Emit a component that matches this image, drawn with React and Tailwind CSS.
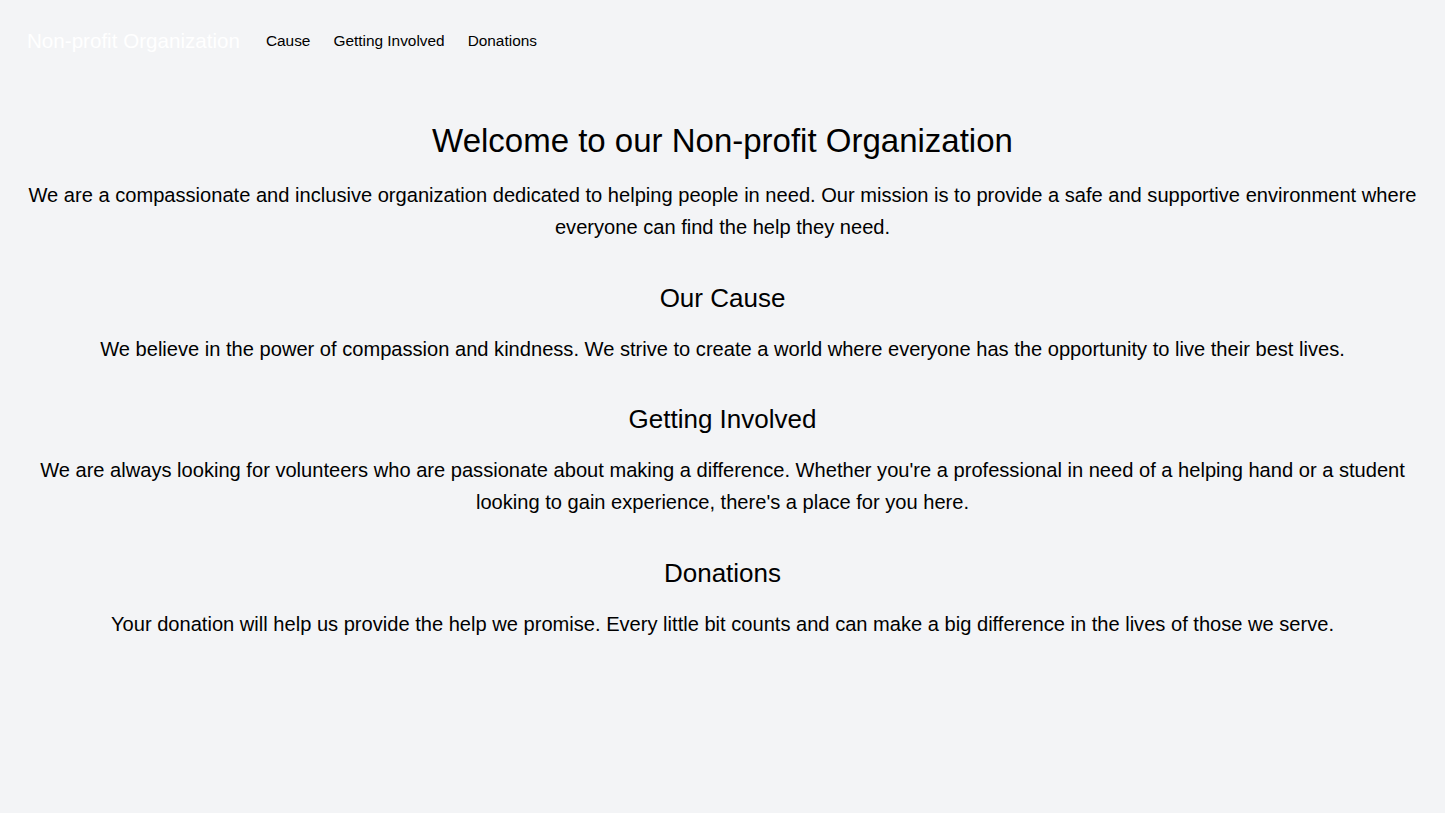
const sections = [
  {
    title: "Our Cause",
    body: "We believe in the power of compassion and kindness. We strive to create a world where everyone has the opportunity to live their best lives.",
  },
  {
    title: "Getting Involved",
    body: "We are always looking for volunteers who are passionate about making a difference. Whether you're a professional in need of a helping hand or a student looking to gain experience, there's a place for you here.",
  },
  {
    title: "Donations",
    body: "Your donation will help us provide the help we promise. Every little bit counts and can make a big difference in the lives of those we serve.",
  },
];

export default function App() {
  return (
    <div className="min-h-screen bg-gray-100 text-black font-['Liberation_Sans',Arial,sans-serif]">
      {/* Top nav */}
      <nav className="flex items-center h-[82px] px-[27px]">
        <a href="#" className="text-[20.6px] leading-8 text-white mr-[26px]">
          Non-profit Organization
        </a>
        <div className="flex items-center gap-[23px] text-[15.4px]">
          <a href="#cause">Cause</a>
          <a href="#involved">Getting Involved</a>
          <a href="#donations">Donations</a>
        </div>
      </nav>

      <main className="px-6 pt-[39px] pb-16 text-center">
        <div className="space-y-[37.5px]">
          {/* Intro */}
          <section>
            <h1 className="text-[33px] leading-10 mb-[18px]">
              Welcome to our Non-profit Organization
            </h1>
            <p className="text-[20.1px] leading-8">
              We are a compassionate and inclusive organization dedicated to helping people in need. Our mission is to provide a safe and supportive environment where everyone can find the help they need.
            </p>
          </section>

          {sections.map((s) => (
            <section key={s.title}>
              <h2 className="text-[26px] leading-[34px] mb-[18px]">{s.title}</h2>
              <p className="text-[20.1px] leading-8">{s.body}</p>
            </section>
          ))}
        </div>
      </main>
    </div>
  );
}
